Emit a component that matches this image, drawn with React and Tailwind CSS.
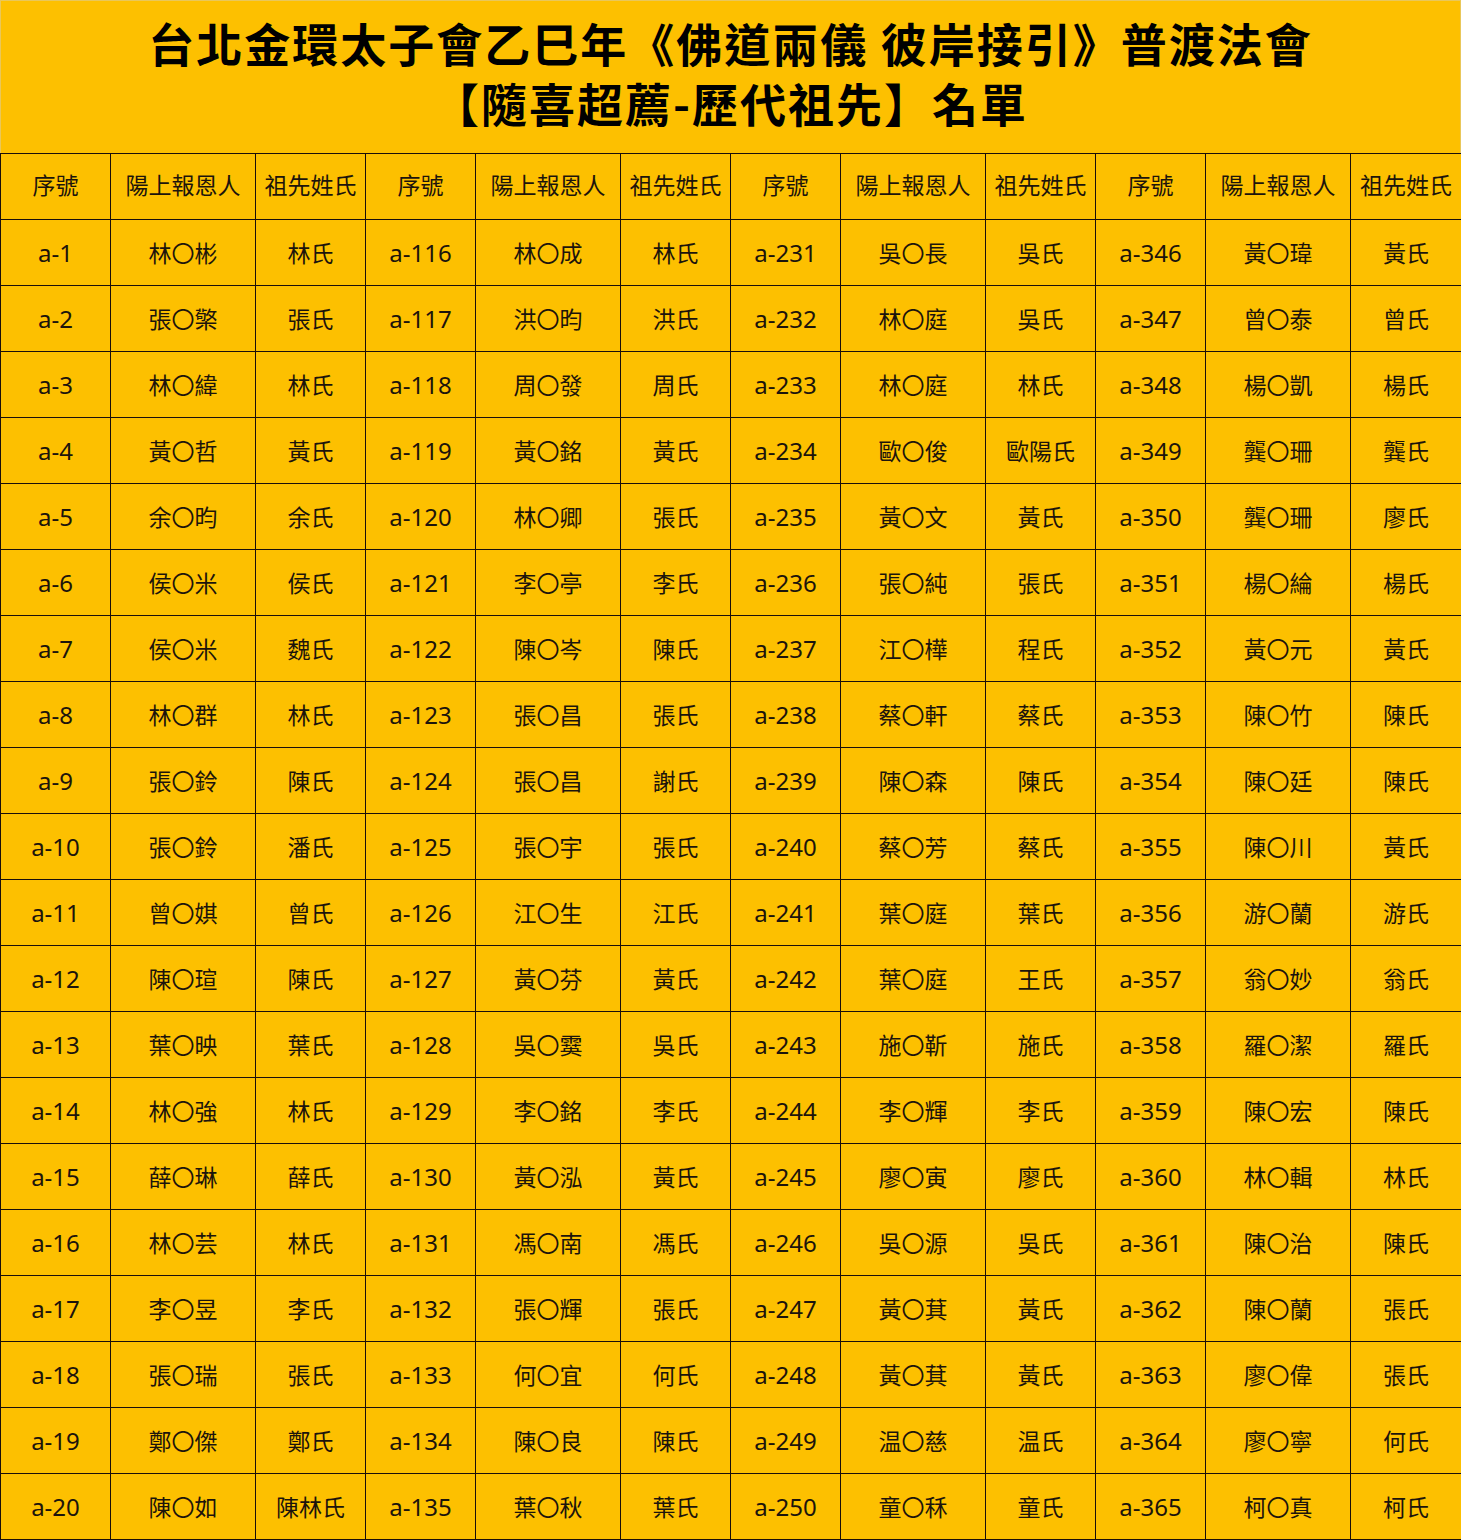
import React from "react";

const g1 = [
  ["林〇彬", "林氏"], ["張〇檠", "張氏"], ["林〇緯", "林氏"], ["黃〇哲", "黃氏"], ["余〇昀", "余氏"],
  ["侯〇米", "侯氏"], ["侯〇米", "魏氏"], ["林〇群", "林氏"], ["張〇鈴", "陳氏"], ["張〇鈴", "潘氏"],
  ["曾〇娸", "曾氏"], ["陳〇瑄", "陳氏"], ["葉〇映", "葉氏"], ["林〇強", "林氏"], ["薛〇琳", "薛氏"],
  ["林〇芸", "林氏"], ["李〇昱", "李氏"], ["張〇瑞", "張氏"], ["鄭〇傑", "鄭氏"], ["陳〇如", "陳林氏"],
];
const g2 = [
  ["林〇成", "林氏"], ["洪〇昀", "洪氏"], ["周〇發", "周氏"], ["黃〇銘", "黃氏"], ["林〇卿", "張氏"],
  ["李〇亭", "李氏"], ["陳〇岑", "陳氏"], ["張〇昌", "張氏"], ["張〇昌", "謝氏"], ["張〇宇", "張氏"],
  ["江〇生", "江氏"], ["黃〇芬", "黃氏"], ["吳〇霙", "吳氏"], ["李〇銘", "李氏"], ["黃〇泓", "黃氏"],
  ["馮〇南", "馮氏"], ["張〇輝", "張氏"], ["何〇宜", "何氏"], ["陳〇良", "陳氏"], ["葉〇秋", "葉氏"],
];
const g3 = [
  ["吳〇長", "吳氏"], ["林〇庭", "吳氏"], ["林〇庭", "林氏"], ["歐〇俊", "歐陽氏"], ["黃〇文", "黃氏"],
  ["張〇純", "張氏"], ["江〇樺", "程氏"], ["蔡〇軒", "蔡氏"], ["陳〇森", "陳氏"], ["蔡〇芳", "蔡氏"],
  ["葉〇庭", "葉氏"], ["葉〇庭", "王氏"], ["施〇靳", "施氏"], ["李〇輝", "李氏"], ["廖〇寅", "廖氏"],
  ["吳〇源", "吳氏"], ["黃〇萁", "黃氏"], ["黃〇萁", "黃氏"], ["温〇慈", "温氏"], ["童〇秝", "童氏"],
];
const g4 = [
  ["黃〇瑋", "黃氏"], ["曾〇泰", "曾氏"], ["楊〇凱", "楊氏"], ["龔〇珊", "龔氏"], ["龔〇珊", "廖氏"],
  ["楊〇綸", "楊氏"], ["黃〇元", "黃氏"], ["陳〇竹", "陳氏"], ["陳〇廷", "陳氏"], ["陳〇川", "黃氏"],
  ["游〇蘭", "游氏"], ["翁〇妙", "翁氏"], ["羅〇潔", "羅氏"], ["陳〇宏", "陳氏"], ["林〇輯", "林氏"],
  ["陳〇治", "陳氏"], ["陳〇蘭", "張氏"], ["廖〇偉", "張氏"], ["廖〇寧", "何氏"], ["柯〇真", "柯氏"],
];
const groups = [
  { start: 1, data: g1 },
  { start: 116, data: g2 },
  { start: 231, data: g3 },
  { start: 346, data: g4 },
];

const cell = "border border-[#1a0f0a] text-center align-middle p-0 whitespace-nowrap";
const cjk = { fontFamily: '"Noto Sans CJK TC", sans-serif' };

export default function App() {
  return (
    <div
      className="w-[1461px] bg-[#fdc000] text-[#1c140c]"
      style={{ fontFamily: '"Noto Sans", "Noto Sans CJK TC", sans-serif' }}
    >
      <div
        className="h-[153px] pt-[11px] text-center font-bold text-black text-[46px] leading-[60px] tracking-[2px] border-l border-r border-t border-[#e9c75a]"
        style={cjk}
      >
        <div>台北金環太子會乙巳年《佛道兩儀 彼岸接引》普渡法會</div>
        <div>【隨喜超薦-歷代祖先】名單</div>
      </div>
      <table className="w-[1461px] table-fixed border-collapse text-[23px]">
        <colgroup>
          {[0, 1, 2, 3].map((i) => (
            <React.Fragment key={i}>
              <col className="w-[110px]" />
              <col className="w-[145px]" />
              <col className={i === 3 ? "w-[111px]" : "w-[110px]"} />
            </React.Fragment>
          ))}
        </colgroup>
        <tbody>
          <tr className="h-[66px]">
            {[0, 1, 2, 3].map((i) => (
              <React.Fragment key={i}>
                <td className={cell} style={cjk}><span className="relative top-[-2px]">序號</span></td>
                <td className={cell} style={cjk}><span className="relative top-[-2px]">陽上報恩人</span></td>
                <td className={cell} style={cjk}><span className="relative top-[-2px]">祖先姓氏</span></td>
              </React.Fragment>
            ))}
          </tr>
          {g1.map((_, r) => (
            <tr key={r} className="h-[66px]">
              {groups.map((g, i) => (
                <React.Fragment key={i}>
                  <td className={cell + " text-[24px]"}>a-{g.start + r}</td>
                  <td className={cell} style={cjk}>{g.data[r][0]}</td>
                  <td className={cell} style={cjk}>{g.data[r][1]}</td>
                </React.Fragment>
              ))}
            </tr>
          ))}
        </tbody>
      </table>
    </div>
  );
}
